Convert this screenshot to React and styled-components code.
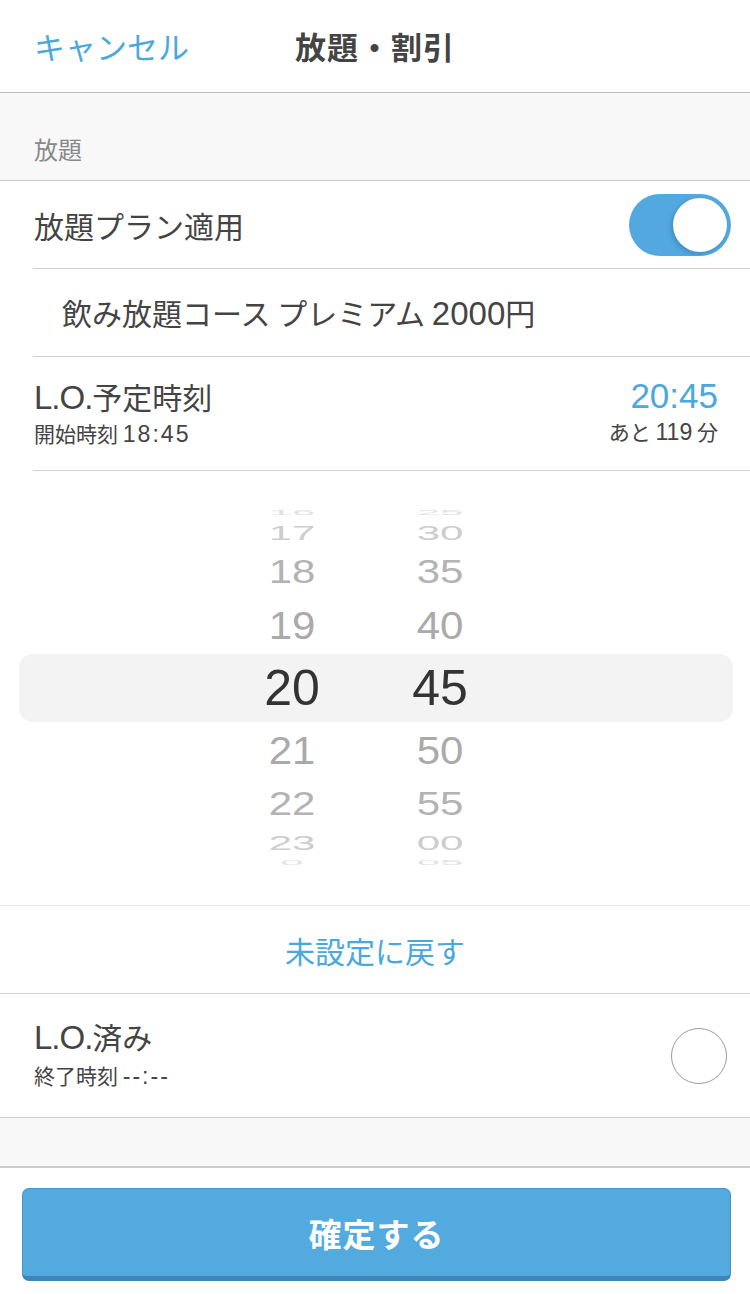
import React from 'react'
import styled, { createGlobalStyle } from 'styled-components'

const GlobalStyle = createGlobalStyle`
    * {
        box-sizing: border-box;
    }
    body {
        margin: 0;
        background: #fff;
        font-family: "Noto Sans CJK JP", "Noto Sans", sans-serif;
        color: #444;
    }
`

// hour / minute pairs on the wheel, top to bottom
const wheel = [
    { hour: '16', min: '25', h: 12, scale: 0.16, color: '#e2e2e2' },
    { hour: '17', min: '30', h: 28, scale: 0.47, color: '#cdcdcd' },
    { hour: '18', min: '35', h: 50, scale: 0.78, color: '#b3b3b3' },
    { hour: '19', min: '40', h: 57, scale: 0.93, color: '#aaaaaa' },
    { hour: '20', min: '45', h: 68, scale: 1, color: '#333333', selected: true },
    { hour: '21', min: '50', h: 57, scale: 0.93, color: '#aaaaaa' },
    { hour: '22', min: '55', h: 50, scale: 0.78, color: '#b3b3b3' },
    { hour: '23', min: '00', h: 28, scale: 0.47, color: '#cdcdcd' },
    { hour: '0', min: '05', h: 12, scale: 0.16, color: '#e2e2e2' },
]

function App() {
    return (
        <Page>
            <GlobalStyle />
            <Header>
                <HeaderLink>キャンセル</HeaderLink>
                <Title>放題・割引</Title>
                <span />
            </Header>

            <Content>
                <SectionHeader>放題</SectionHeader>

                <Row>
                    <Label>放題プラン適用</Label>
                    <Toggle>
                        <Knob />
                    </Toggle>
                </Row>

                <Row $indent>
                    <Label>飲み放題コース プレミアム <Num>2000</Num>円</Label>
                </Row>

                <TimeRow>
                    <Stack>
                        <Label><Num $tight>L.O.</Num>予定時刻</Label>
                        <SubLabel>開始時刻 <Num $wide>18:45</Num></SubLabel>
                    </Stack>
                    <Stack $right>
                        <TimeValue>20:45</TimeValue>
                        <SubLabel>あと <Num>119</Num> 分</SubLabel>
                    </Stack>
                </TimeRow>

                <Picker>
                    {wheel.map((r) => (
                        <PickerRow key={r.hour} $h={r.h} $selected={r.selected}>
                            <PickerCell>
                                <Digits $scale={r.scale} $color={r.color} $selected={r.selected}>{r.hour}</Digits>
                            </PickerCell>
                            <PickerCell>
                                <Digits $scale={r.scale} $color={r.color} $selected={r.selected}>{r.min}</Digits>
                            </PickerCell>
                        </PickerRow>
                    ))}
                </Picker>

                <ActionRow>未設定に戻す</ActionRow>

                <DoneRow>
                    <Stack>
                        <Label><Num $tight>L.O.</Num>済み</Label>
                        <SubLabel>終了時刻 <Num $wide>--:--</Num></SubLabel>
                    </Stack>
                    <Radio />
                </DoneRow>

                <Spacer />
            </Content>

            <Footer>
                <ConfirmButton>確定する</ConfirmButton>
            </Footer>
        </Page>
    )
}

export default App

const Page = styled.div`
    width: 750px;
    height: 1294px;
    display: flex;
    flex-direction: column;
    overflow: hidden;
`

const Header = styled.div`
    height: 93px;
    flex-shrink: 0;
    display: grid;
    grid-template-columns: 1fr auto 1fr;
    align-items: center;
    padding: 0 34px 2px;
    border-bottom: 1px solid #bdbdbd;
`

const HeaderLink = styled.span`
    color: #4aa8dd;
    font-size: 31px;
`

const Title = styled.span`
    font-size: 31px;
    font-weight: 700;
    color: #444;
    letter-spacing: 1px;
`

const Content = styled.div`
    flex: 1;
    overflow: hidden;
`

const SectionHeader = styled.div`
    height: 88px;
    background: #f8f8f8;
    border-bottom: 1px solid #c9c9c9;
    display: flex;
    align-items: flex-end;
    padding: 0 34px 14px;
    font-size: 24px;
    color: #888;
`

const Row = styled.div`
    height: 88px;
    margin-left: 33px;
    padding: 0 19px 0 ${(p) => (p.$indent ? '29px' : '1px')};
    display: flex;
    align-items: center;
    justify-content: space-between;
    border-bottom: 1px solid #cfcfcf;
`

const Label = styled.div`
    font-size: 30px;
    line-height: 36px;
    color: #444;
`

const SubLabel = styled.div`
    font-size: 21px;
    line-height: 26px;
    color: #444;
`

// latin and digits run a little larger than the kana beside them
const Num = styled.span`
    font-family: "Liberation Sans", Arial, sans-serif;
    font-size: 1.1em;
    letter-spacing: ${(p) => (p.$wide ? '2px' : p.$tight ? '-1px' : '0')};
`

const Toggle = styled.div`
    width: 102px;
    height: 62px;
    border-radius: 31px;
    background: #53a9df;
    padding: 4px;
    display: flex;
    justify-content: flex-end;
`

const Knob = styled.div`
    width: 54px;
    height: 54px;
    border-radius: 50%;
    background: #fff;
    box-shadow: -2px 2px 5px rgba(0, 60, 110, 0.25);
`

const TimeRow = styled.div`
    height: 114px;
    margin-left: 33px;
    padding: 21px 32px 0 1px;
    display: flex;
    justify-content: space-between;
    align-items: flex-start;
    border-bottom: 1px solid #cfcfcf;
`

const Stack = styled.div`
    display: flex;
    flex-direction: column;
    gap: 4px;
    align-items: ${(p) => (p.$right ? 'flex-end' : 'flex-start')};
`

const TimeValue = styled.div`
    font-size: 35px;
    line-height: 36px;
    color: #4aa8dd;
    font-family: "Liberation Sans", sans-serif;
`

const Picker = styled.div`
    height: 435px;
    padding: 36px 0;
    border-bottom: 1px solid #e9e9e9;
    display: flex;
    flex-direction: column;
`

const PickerRow = styled.div`
    height: ${(p) => p.$h}px;
    flex-shrink: 0;
    margin: 0 ${(p) => (p.$selected ? '17px' : '0')} 0 ${(p) => (p.$selected ? '19px' : '0')};
    padding-left: ${(p) => (p.$selected ? '223px' : '242px')};
    background: ${(p) => (p.$selected ? '#f3f3f3' : 'transparent')};
    border-radius: 14px;
    display: flex;
    gap: 48px;
    overflow: hidden;
`

const PickerCell = styled.div`
    width: 100px;
    display: flex;
    align-items: center;
    justify-content: center;
`

const Digits = styled.span`
    display: inline-block;
    font-family: "Liberation Sans", Arial, sans-serif;
    font-size: ${(p) => (p.$selected ? '50px' : '42px')};
    line-height: 1;
    color: ${(p) => p.$color};
    transform: scaleY(${(p) => p.$scale});
`

const ActionRow = styled.div`
    height: 88px;
    display: flex;
    align-items: center;
    justify-content: center;
    border-bottom: 1px solid #cfcfcf;
    color: #4aa8dd;
    font-size: 30px;
`

const DoneRow = styled.div`
    height: 124px;
    padding: 0 23px 0 34px;
    display: flex;
    align-items: center;
    justify-content: space-between;
    border-bottom: 1px solid #cfcfcf;

    ${Stack} {
        gap: 6px;
        margin-top: -4px;
    }
`

const Radio = styled.div`
    width: 56px;
    height: 56px;
    border-radius: 50%;
    border: 1px solid #9a9a9a;
`

const Spacer = styled.div`
    height: 48px;
    background: #f8f8f8;
`

const Footer = styled.div`
    flex-shrink: 0;
    border-top: 2px solid #cbcbcb;
    padding: 20px 19px 13px 22px;
    background: #fff;
`

const ConfirmButton = styled.button`
    width: 100%;
    height: 93px;
    border: 1px solid #4b93c6;
    border-bottom: 5px solid #3f86b8;
    border-radius: 7px;
    background: #53aadf;
    color: #fff;
    font-family: "Noto Sans CJK JP", sans-serif;
    font-size: 33px;
    font-weight: 700;
    letter-spacing: 1px;
    cursor: pointer;
`
